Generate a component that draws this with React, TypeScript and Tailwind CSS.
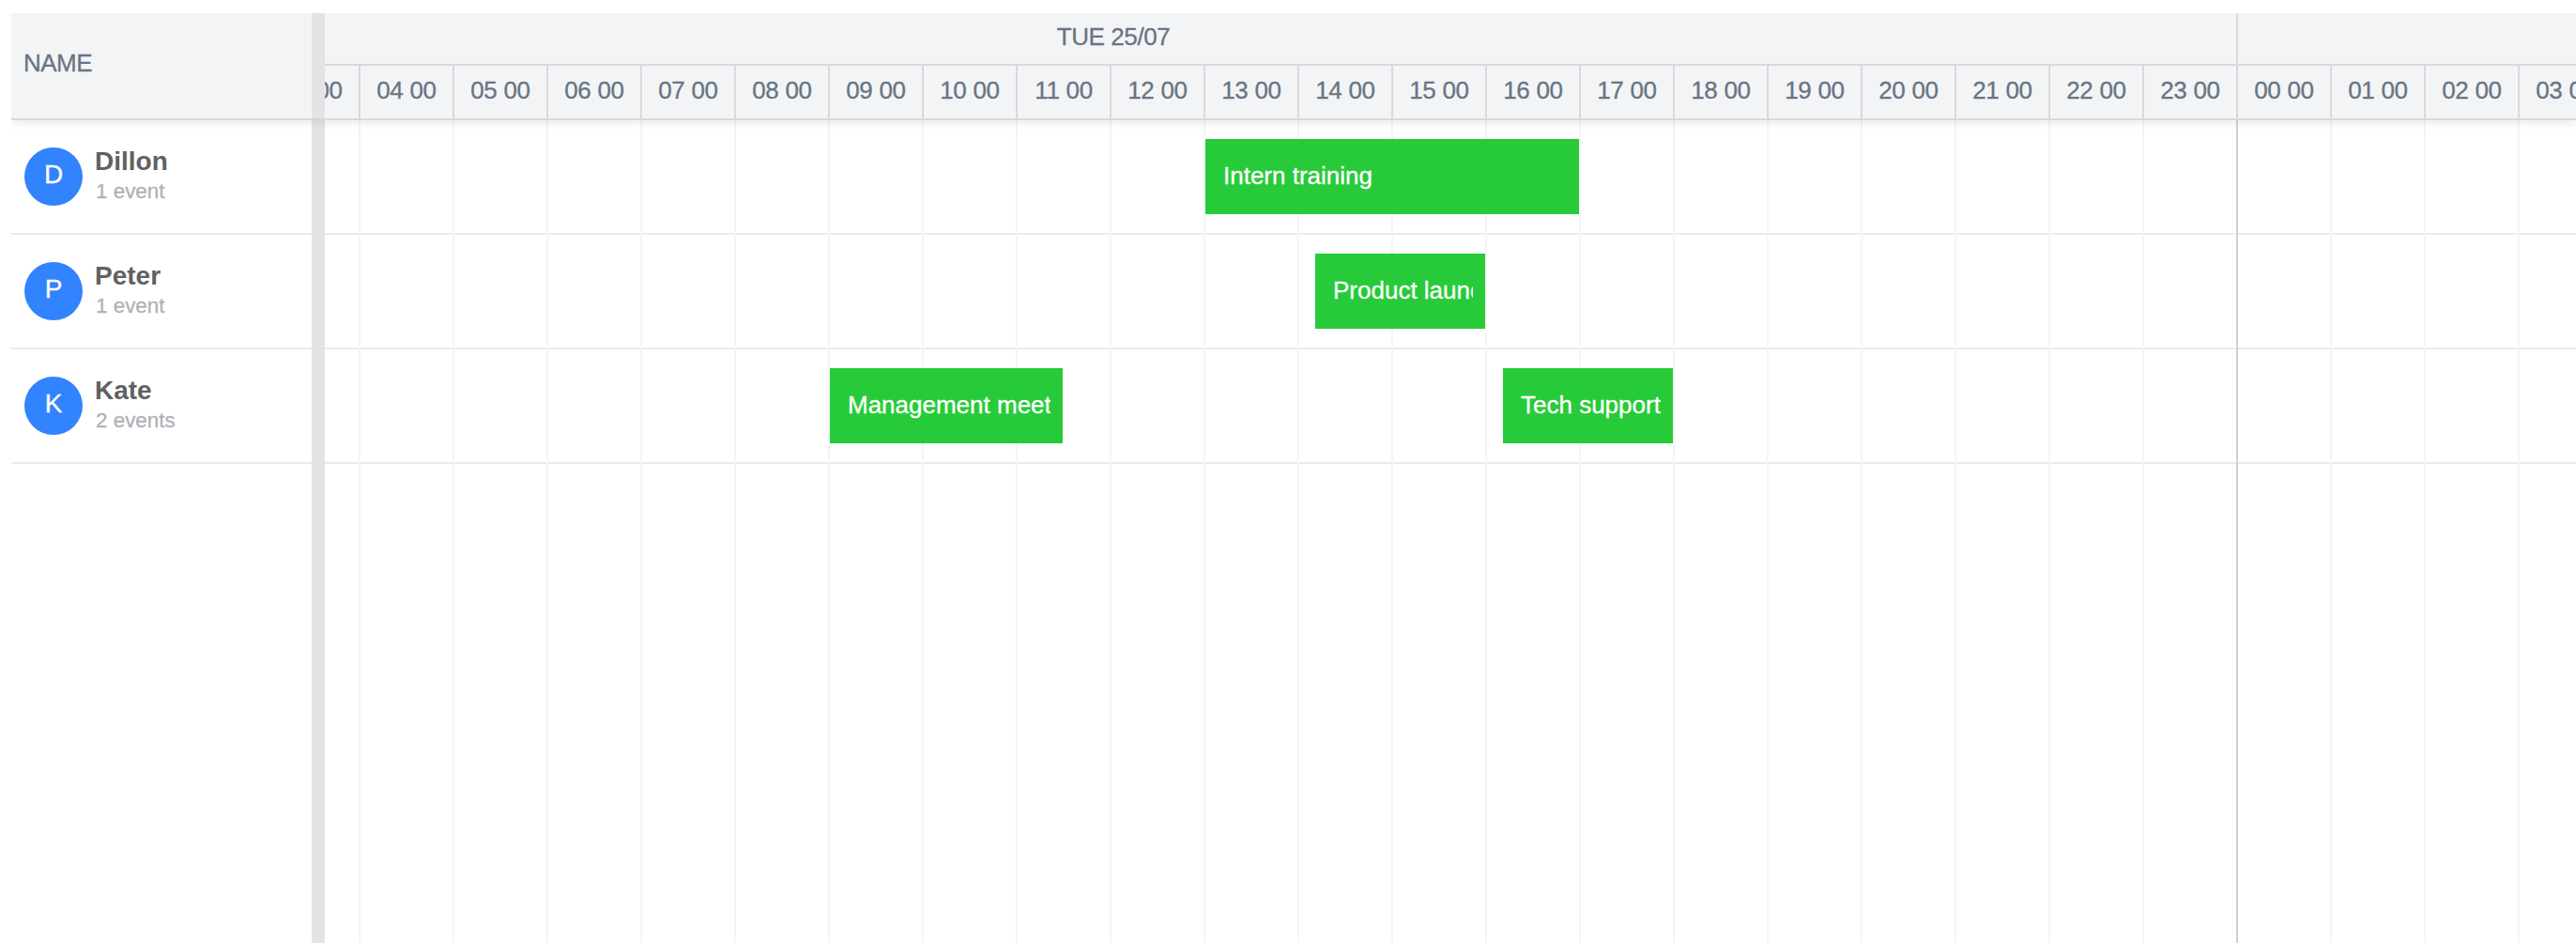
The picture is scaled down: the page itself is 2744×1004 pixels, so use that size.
const HOUR = 100;
const ORIGIN = 284;
const PANE = 346;

type Item = { title: string; start: number; end: number };
type Resource = { name: string; count: string; items: Item[] };

const resources: Resource[] = [
  { name: 'Dillon', count: '1 event', items: [{ title: 'Intern training', start: 1284, end: 1682 }] },
  { name: 'Peter', count: '1 event', items: [{ title: 'Product launch', start: 1401, end: 1582 }] },
  {
    name: 'Kate',
    count: '2 events',
    items: [
      { title: 'Management meeting', start: 884, end: 1132 },
      { title: 'Tech support', start: 1601, end: 1782 },
    ],
  },
];

const hours = Array.from({ length: 25 }, (_, i) => (i + 3) % 24);

function HourHeader() {
  return (
    <div className="flex h-[58px] border-b-2 border-[#d7d9dc]" style={{ marginLeft: ORIGIN - PANE, width: hours.length * HOUR }}>
      {hours.map((h, i) => (
        <div key={i} className="flex w-[100px] shrink-0 items-center justify-center border-r-2 border-[#d7d9dc] pb-[3px] tracking-[-0.3px]">
          {String(h).padStart(2, '0')} 00
        </div>
      ))}
    </div>
  );
}

function Lane({ items }: { items: Item[] }) {
  return (
    <div className="flex h-[122px] pt-5">
      {items.map((e, i) => (
        <div
          key={e.title}
          className="flex h-20 shrink-0 items-center bg-[#27cb39] pr-[13px] pb-px pl-[19px] text-[26px] text-white"
          style={{ marginLeft: e.start - (i ? items[i - 1].end : PANE), width: e.end - e.start }}
        >
          <span className="min-w-0 overflow-hidden whitespace-nowrap [-webkit-text-stroke:0.3px]">{e.title}</span>
        </div>
      ))}
    </div>
  );
}

export default function App() {
  return (
    <div className="h-[1004px] w-[2744px] overflow-hidden bg-white pt-[14px] pl-3 font-['Liberation_Sans',Arial,sans-serif]">
      <div className="flex h-[990px] flex-col overflow-hidden">
        <header className="z-10 flex h-[114px] shrink-0 bg-[#f3f4f6] text-[26px] text-[#687483] shadow-[0_4px_8px_rgba(0,0,0,0.07)] [-webkit-text-stroke:0.3px]">
          <div className="flex w-80 shrink-0 items-center border-b-2 border-[#d7d9dc] pb-[5px] pl-[13px] tracking-[-0.5px]">NAME</div>
          <div className="w-[14px] shrink-0 border-b-2 border-[#d3d6d9] bg-[#e4e4e6]" />
          <div className="min-w-0 flex-1 overflow-hidden">
            <div className="flex h-14 border-b-2 border-[#d7d9dc]">
              <div className="flex w-[2038px] shrink-0 justify-center border-r-2 border-[#d7d9dc] pt-[6px] pr-[356px] tracking-[-0.4px]">TUE 25/07</div>
            </div>
            <HourHeader />
          </div>
        </header>

        <main className="flex min-h-0 flex-1">
          <aside className="w-80 shrink-0">
            {resources.map((r) => (
              <div key={r.name} className="flex h-[122px] border-b-2 border-[#e9eaea] pl-[14px]">
                <div className="mt-[29px] flex size-[62px] shrink-0 items-center justify-center rounded-full bg-[#3183fe] pb-[4px] text-[28px] text-white [-webkit-text-stroke:0.3px]">
                  {r.name[0]}
                </div>
                <div className="mt-[28px] ml-[13px]">
                  <div className="text-[28px] leading-8 font-bold text-[#606163]">{r.name}</div>
                  <div className="pl-px text-[22.4px] leading-[32px] text-[#b0b0b8] [-webkit-text-stroke:0.3px]">{r.count}</div>
                </div>
              </div>
            ))}
          </aside>
          <div className="w-[14px] shrink-0 bg-[#e4e4e6]" />
          <section className="grid min-w-0 flex-1 overflow-hidden">
            <div className="col-start-1 row-start-1 min-w-0">
              {resources.map((r) => (
                <div key={r.name} className="h-[122px] border-b-2 border-[#e9eaea]" />
              ))}
            </div>
            <div className="col-start-1 row-start-1 flex min-w-0" style={{ marginLeft: ORIGIN - PANE }}>
              {hours.map((h, i) => (
                <div key={i} className={h === 23 ? 'w-[100px] shrink-0 border-r-2 border-[#cfd0d1]' : 'w-[100px] shrink-0 border-r-2 border-[#f4f5f5]'} />
              ))}
            </div>
            <div className="col-start-1 row-start-1 min-w-0">
              {resources.map((r) => (
                <Lane key={r.name} items={r.items} />
              ))}
            </div>
          </section>
        </main>
      </div>
    </div>
  );
}
